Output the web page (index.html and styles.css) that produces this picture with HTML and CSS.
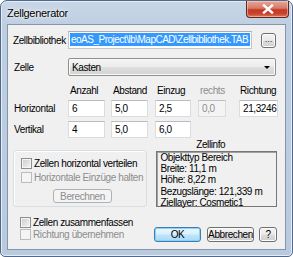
FILE: index.html
```html
<!DOCTYPE html>
<html>
<head>
<meta charset="utf-8">
<link rel="stylesheet" href="styles.css">
</head>
<body>
<div class="window">
  <div class="titlebar">
    <span class="title">Zellgenerator</span>
    <div class="close">
      <svg width="12" height="10" viewBox="0 0 12 10"><path d="M2 1.5 L10 8.5 M10 1.5 L2 8.5" stroke="#ffffff" stroke-width="2.4" stroke-linecap="square"/></svg>
    </div>
  </div>
  <div class="client">
    <div class="row row-lib">
      <span class="lbl lbl-lib">Zellbibliothek</span>
      <div class="field field-lib"><span class="hl">eoAS_Project\lb\MapCAD\Zellbibliothek.TAB</span></div>
      <div class="btn btn-dots">...</div>
    </div>
    <div class="row row-cell">
      <span class="lbl">Zelle</span>
      <div class="combo"><span>Kasten</span><span class="arrow"></span></div>
    </div>
    <div class="grid">
      <span></span>
      <span class="hd">Anzahl</span>
      <span class="hd">Abstand</span>
      <span class="hd">Einzug</span>
      <span class="hd dis">rechts</span>
      <span class="hd hd-r">Richtung</span>

      <span class="lbl">Horizontal</span>
      <div class="field num w37">6</div>
      <div class="field num w37">5,0</div>
      <div class="field num w36">2,5</div>
      <div class="field num w28 disf">0,0</div>
      <div class="field num w39">21,3246</div>

      <span class="lbl">Vertikal</span>
      <div class="field num w37">4</div>
      <div class="field num w37">5,0</div>
      <div class="field num w36">6,0</div>
    </div>
    <div class="mid">
      <div class="group">
        <div class="chk"><span class="box box-on"></span><span>Zellen horizontal verteilen</span></div>
        <div class="chk dis"><span class="box box-dis"></span><span>Horizontale Einzüge halten</span></div>
        <div class="btn btn-calc">Berechnen</div>
      </div>
      <div class="infocol">
        <div class="infotitle">Zellinfo</div>
        <div class="info">
          <div>Objekttyp Bereich</div>
          <div>Breite: 11,1 m</div>
          <div>Höhe: 8,22 m</div>
          <div>Bezugslänge: 121,339 m</div>
          <div>Ziellayer: Cosmetic1</div>
        </div>
      </div>
    </div>
    <div class="bottom">
      <div class="checks">
        <div class="chk"><span class="box box-on"></span><span>Zellen zusammenfassen</span></div>
        <div class="chk dis"><span class="box box-dis"></span><span>Richtung übernehmen</span></div>
      </div>
      <div class="buttons">
        <div class="btn btn-ok">OK</div>
        <div class="btn btn-cancel">Abbrechen</div>
        <div class="btn btn-help">?</div>
      </div>
    </div>
  </div>
</div>
</body>
</html>
```

FILE: styles.css
```css
html, body {
  margin: 0;
  padding: 0;
  background: #ffffff;
}
body {
  width: 293px;
  height: 257px;
  overflow: hidden;
  font-family: "Liberation Sans", Arial, sans-serif;
  font-size: 10px;
  letter-spacing: -0.4px;
  color: #000;
}
.window {
  box-sizing: border-box;
  width: 293px;
  height: 257px;
  border: 1px solid #51698a;
  border-radius: 7px 7px 5px 5px;
  background: linear-gradient(180deg, #c8d6e7 0px, #bfcfe2 24px, #b9cade 100%);
  box-shadow: inset 0 0 0 1px #e4ecf5;
  padding: 0 6px 6px 6px;
  display: flex;
  flex-direction: column;
}
.titlebar {
  height: 23px;
  display: flex;
  align-items: flex-start;
  justify-content: space-between;
  flex: none;
}
.title {
  font-size: 11px;
  letter-spacing: -0.3px;
  margin-top: 6px;
  color: #000;
  text-shadow: 0 0 6px #ffffff, 0 0 3px #ffffff;
}
.close {
  width: 41px;
  height: 16px;
  margin-right: -3px;
  border: 1px solid #5b2a24;
  border-top: none;
  border-radius: 0 0 4px 4px;
  background: linear-gradient(180deg, #e8a898 0%, #d77a66 45%, #c23a22 55%, #c9452f 80%, #e07760 100%);
  box-shadow: inset 0 0 0 1px rgba(255,220,210,0.5);
  display: flex;
  align-items: center;
  justify-content: center;
}
.client {
  box-sizing: border-box;
  flex: 1;
  background: #f0f0f0;
  border: 1px solid #8495ab;
  padding: 6px 8px 0 5px;
  display: flex;
  flex-direction: column;
}
.client > * {
  flex: none;
}
.row {
  display: flex;
  align-items: center;
  height: 18px;
}
.lbl {
  width: 55px;
  flex: none;
  white-space: nowrap;
}
.row-cell {
  margin-top: 9px;
}
.row-cell .lbl {
  padding-left: 1px;
  width: 54px;
}
.field {
  box-sizing: border-box;
  background: #ffffff;
  border: 1px solid #c3c6cc;
  border-top-color: #abadb3;
  height: 18px;
  white-space: nowrap;
  overflow: hidden;
  flex: none;
}
.field-lib {
  width: 184px;
  padding: 1px 1px 0 1px;
}
.hl {
  display: block;
  background: #3399ff;
  color: #ffffff;
  height: 13px;
  line-height: 13px;
  padding-left: 1px;
  letter-spacing: -0.5px;
  overflow: hidden;
}
.btn {
  box-sizing: border-box;
  border: 1px solid #707070;
  border-radius: 3px;
  background: linear-gradient(180deg, #f2f2f2 0%, #ebebeb 49%, #dddddd 51%, #cfcfcf 100%);
  box-shadow: inset 0 0 0 1px #fcfcfc;
  display: flex;
  align-items: center;
  justify-content: center;
  white-space: nowrap;
  flex: none;
}
.btn-dots {
  width: 15px;
  height: 15px;
  margin-left: 9px;
  font-size: 9px;
  letter-spacing: 0;
  align-items: flex-end;
  padding-bottom: 3px;
  color: #333;
}
.combo {
  box-sizing: border-box;
  width: 208px;
  height: 18px;
  border: 1px solid #8e8f8f;
  border-radius: 2px;
  background: linear-gradient(180deg, #f4f4f4 0%, #ececec 49%, #dfdfdf 51%, #d3d3d3 100%);
  box-shadow: inset 0 0 0 1px #fafafa;
  display: flex;
  align-items: center;
  justify-content: space-between;
  padding: 0 5px 0 3px;
}
.arrow {
  width: 0;
  height: 0;
  border-left: 3px solid transparent;
  border-right: 3px solid transparent;
  border-top: 3px solid #000;
}
.grid {
  display: grid;
  grid-template-columns: 55px 43px 44px 43px 41px 39px;
  grid-template-rows: 12px 17px 17px;
  row-gap: 4px;
  margin-top: 8px;
  align-items: center;
}
.grid .lbl {
  padding-left: 1px;
}
.hd {
  padding-left: 2px;
  white-space: nowrap;
}
.hd-r {
  padding-left: 1px;
}
.dis {
  color: #8d8d8d;
}
.num {
  height: 17px;
  line-height: 15px;
  padding-left: 3px;
  border-color: #dadce0;
  border-top-color: #b9bcc2;
}
.w37 { width: 37px; }
.w36 { width: 36px; }
.w28 { width: 28px; }
.w39 { width: 39px; }
.disf {
  background: #f4f4f4;
  color: #8d8d8d;
}
.mid {
  display: flex;
  margin-top: 1px;
  align-items: flex-start;
}
.group {
  box-sizing: border-box;
  width: 135px;
  height: 57px;
  margin-top: 11px;
  border: 1px solid #d5dfe5;
  border-radius: 3px;
  box-shadow: 1px 1px 0 #ffffff inset;
  padding: 6px 0 0 7px;
  display: flex;
  flex-direction: column;
}
.chk {
  display: flex;
  align-items: center;
  height: 13px;
  white-space: nowrap;
}
.group .chk + .chk {
  margin-top: 1px;
}
.box {
  box-sizing: border-box;
  width: 11px;
  height: 11px;
  margin-right: 2px;
  border: 1px solid #8e8f8f;
  flex: none;
}
.box-on {
  background: linear-gradient(135deg, #c6cace 0%, #e4e4e4 60%, #f4f4f4 100%);
  box-shadow: inset 0 0 0 1px #f4f4f4;
}
.box-dis {
  border-color: #bcbcbc;
  background: #f4f4f4;
}
.btn-calc {
  width: 59px;
  height: 14px;
  margin-left: 32px;
  margin-top: 5px;
  border-color: #adb2b5;
  background: #f4f4f4;
  box-shadow: none;
  color: #8d8d8d;
}
.infocol {
  margin-left: 9px;
  width: 121px;
  display: flex;
  flex-direction: column;
}
.infotitle {
  text-align: center;
  height: 12px;
  line-height: 12px;
  padding-right: 12px;
}
.info {
  box-sizing: border-box;
  height: 56px;
  border: 1px solid #777777;
  box-shadow: inset 1px 1px 0 #a0a0a0;
  padding: 0 0 0 3px;
  line-height: 11.2px;
  white-space: nowrap;
}
.bottom {
  display: flex;
  margin-top: 9px;
  justify-content: space-between;
  align-items: flex-start;
}
.checks {
  padding-left: 7px;
  display: flex;
  flex-direction: column;
}
.checks .chk {
  height: 12px;
}
.buttons {
  display: flex;
  gap: 6px;
  margin-top: 11px;
}
.buttons .btn {
  height: 15px;
}
.btn-ok {
  width: 47px;
  border-color: #3c7fb1;
  background: linear-gradient(180deg, #eaf6fd 0%, #d9f0fc 49%, #bee6fd 51%, #a7d9f5 100%);
  box-shadow: inset 0 0 0 1px #8ed0f5;
}
.btn-cancel {
  width: 47px;
}
.btn-help {
  width: 18px;
  margin-left: -1px;
}
```
